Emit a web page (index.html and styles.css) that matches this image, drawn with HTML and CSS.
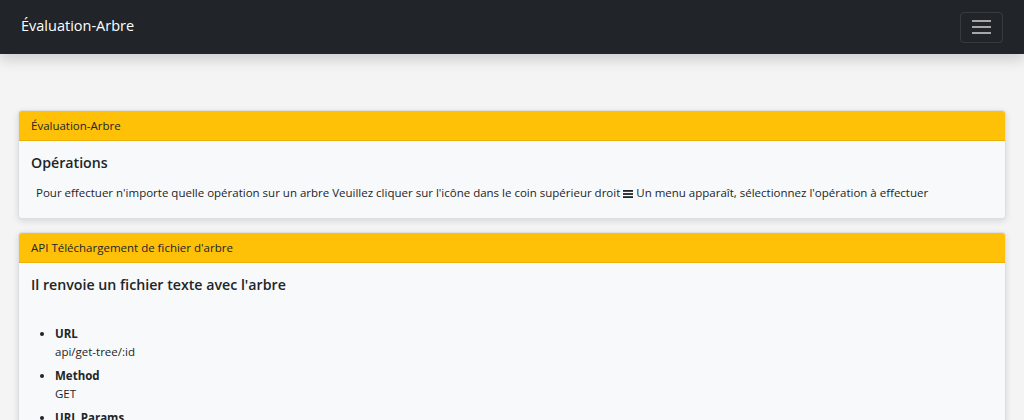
FILE: index.html
```html
<!DOCTYPE html>
<html lang="fr">

<head>
    <meta charset="UTF-8">
    <meta name="viewport" content="width=device-width, initial-scale=1.0">
    <title>Évaluation-Arbre</title>
    <link rel="stylesheet" href="styles.css">
</head>

<body>
<nav class="navbar">
    <a class="brand" href="#">Évaluation-Arbre</a>
    <button class="toggler" aria-label="Menu">
        <span class="toggler-icon"><span></span><span></span><span></span></span>
    </button>
</nav>

<div class="page">
    <!-- Carte d'introduction -->
    <div class="card">
        <div class="card-header">Évaluation-Arbre</div>
        <div class="card-body">
            <h5 class="card-title">Opérations</h5>
            <p class="card-text intro">
                Pour effectuer n'importe quelle opération sur un arbre Veuillez cliquer sur l'icône dans le coin supérieur droit
                <svg class="list-icon" viewBox="0 0 10 8" width="10" height="8"><rect x="0" y="0" width="10" height="1.8"/><rect x="0" y="3.1" width="10" height="1.8"/><rect x="0" y="6.2" width="10" height="1.8"/></svg>
                Un menu apparaît, sélectionnez l'opération à effectuer
            </p>
        </div>
    </div>

    <!-- API téléchargement -->
    <div class="card">
        <div class="card-header">API Téléchargement de fichier d'arbre</div>
        <div class="card-body">
            <h5 class="card-title">Il renvoie un fichier texte avec l'arbre</h5>
            <ul class="api-list">
                <li><strong>URL</strong><div>api/get-tree/:id</div></li>
                <li><strong>Method</strong><div>GET</div></li>
                <li><strong>URL Params</strong><div>id=[integer] identifiant de l'arbre</div></li>
                <li><strong>Success Response</strong><div>Code: 200</div></li>
            </ul>
        </div>
    </div>
</div>
</body>

</html>
```

FILE: styles.css
```css
* {
    box-sizing: border-box;
    margin: 0;
    padding: 0;
}

body {
    font-family: "Open Sans", "Noto Sans", Arial, sans-serif;
    font-size: 11.5px;
    line-height: 18px;
    color: #212529;
    background-color: #f4f4f4;
}

.navbar {
    background-color: #212529;
    height: 54px;
    padding: 0 21px;
    display: flex;
    justify-content: space-between;
    align-items: center;
    box-shadow: 0 6px 12px rgba(0, 0, 0, 0.15);
    position: relative;
}

.brand {
    color: #fff;
    text-decoration: none;
    font-size: 14.5px;
    margin-top: -2px;
}

.toggler {
    width: 43px;
    height: 31px;
    background: transparent;
    border: 1px solid rgba(255, 255, 255, 0.1);
    border-radius: 4px;
    display: flex;
    justify-content: center;
    align-items: center;
}

.toggler-icon {
    display: flex;
    flex-direction: column;
    gap: 4px;
    width: 19px;
}

.toggler-icon span {
    height: 2px;
    background-color: rgba(255, 255, 255, 0.6);
}

.page {
    padding: 56px 18px 0;
}

.card {
    background-color: #f8f9fa;
    border: 1px solid rgba(0, 0, 0, 0.1);
    border-radius: 4px;
    box-shadow: 0 2px 6px rgba(0, 0, 0, 0.12);
    margin-bottom: 13px;
    overflow: hidden;
}

.card-header {
    background-color: #ffc107;
    height: 30px;
    padding: 0 12px;
    line-height: 29px;
    border-bottom: 1px solid rgba(0, 0, 0, 0.08);
}

.card-body {
    padding: 12px;
}

.card-title {
    font-size: 14.2px;
    font-weight: 600;
    line-height: 18px;
    margin-top: 1px;
}

.intro {
    padding-left: 5px;
    margin-top: 12px;
    margin-bottom: 4px;
}

.list-icon {
    fill: #212529;
    vertical-align: -1px;
}

.api-list {
    margin-top: 31px;
    padding-left: 24px;
}

.api-list li {
    margin-bottom: 6px;
}

.api-list strong {
    font-weight: 700;
}
```
